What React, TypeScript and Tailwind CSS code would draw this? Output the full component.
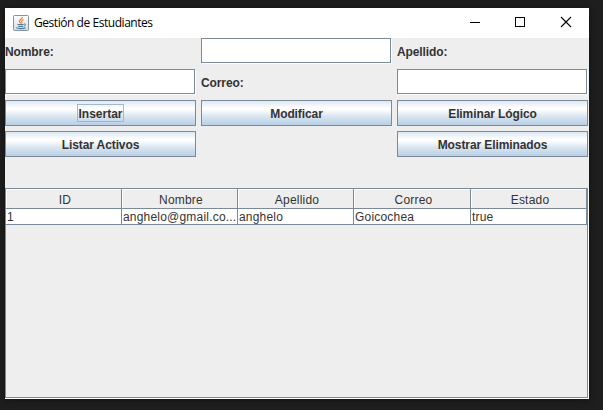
import React from "react";

function JavaIcon() {
  return (
    <svg width="16" height="16" viewBox="0 0 16 16" fill="none">
      <defs>
        <linearGradient id="plate" x1="0" y1="0" x2="0" y2="1">
          <stop offset="0" stopColor="#fdfdfd" />
          <stop offset="1" stopColor="#d3dbe2" />
        </linearGradient>
      </defs>
      <rect x="0.5" y="0.5" width="15" height="15" rx="0.8" fill="url(#plate)" stroke="#8095a8" />
      <path d="M9.2 2C9.8 3.8 6.2 4.7 6.4 6.4C6.5 7.2 7.3 7.7 7.8 8.4" stroke="#e8873a" strokeWidth="1.3" />
      <path d="M10.7 4.6C9 5.2 8.2 5.9 8.9 6.9C9.3 7.6 8.8 8 8.3 8.5" stroke="#e8873a" strokeWidth="1.1" />
      <path d="M4.5 9.5H10.6M5.3 11.4H10.2" stroke="#547b98" strokeWidth="1.1" />
      <path d="M10.8 9C13 8.5 13.1 10.4 11 11.3" stroke="#547b98" strokeWidth="1" />
      <path d="M3.2 12.6C4.5 13.9 10.8 13.8 12.6 12.7" stroke="#547b98" strokeWidth="1.2" />
    </svg>
  );
}

function TitleBar() {
  return (
    <header className="flex h-[30px] items-center bg-white pl-2">
      <JavaIcon />
      <span className="ml-[5px] w-[400px] font-['Open_Sans','Noto_Sans',sans-serif] text-[12px] leading-4 tracking-[-0.45px] whitespace-nowrap text-black">
        Gestión de Estudiantes
      </span>
      <svg className="ml-auto shrink-0" width="135" height="30" viewBox="0 0 135 30" fill="none" stroke="#000" shapeRendering="crispEdges">
        <path d="M16 14.5H26" />
        <rect x="61.5" y="9.5" width="9" height="9" />
        <path d="M107 9L117 19M117 9L107 19" shapeRendering="auto" strokeWidth="1.1" />
      </svg>
    </header>
  );
}

function Label({ children }: { children: React.ReactNode }) {
  return <label className="flex items-center pt-0.5 font-bold tracking-[-0.1px]">{children}</label>;
}

function Field() {
  return (
    <input
      type="text"
      className="mr-px mb-px min-w-0 border border-[#7a8a99] bg-white shadow-[1px_1px_0_#fff] outline-none"
    />
  );
}

function Button({ children, focused = false }: { children: React.ReactNode; focused?: boolean }) {
  return (
    <button className="flex items-center justify-center border border-[#7a8a99] bg-[linear-gradient(to_bottom,#dde8f3_0%,#ffffff_30%,#ffffff_36%,#dce7f1_62%,#b8cfe5_100%)] font-bold tracking-[-0.1px]">
      <span
        className={
          focused
            ? "w-[47px] border border-[#a3b8cc] pt-0.5 text-center leading-[14px] tracking-normal"
            : "pt-0.5 leading-[14px]"
        }
      >
        {children}
      </span>
    </button>
  );
}

const columns = ["ID", "Nombre", "Apellido", "Correo", "Estado"];
const rows = [["1", "anghelo@gmail.co...", "anghelo", "Goicochea", "true"]];

function StudentTable() {
  return (
    <section className="h-[211px] border-r border-b border-white">
      <div className="h-[210px] border border-[#7a8a99] tracking-[0.2px]">
        <div className="grid w-[581px] grid-cols-[116px_116px_116px_117px_116px]">
          {columns.map((c) => (
            <div key={c} className="h-5 border-r border-b border-[#7a8a99] pt-px pl-[3px] text-center leading-5 shadow-[inset_1px_1px_0_#fff]">
              {c}
            </div>
          ))}
          {rows.flat().map((v, i) => (
            <div key={i} className="h-4 overflow-hidden border-r border-b border-[#7a8a99] bg-white pt-px pl-px leading-[15px] whitespace-nowrap">
              {v}
            </div>
          ))}
        </div>
      </div>
    </section>
  );
}

export default function App() {
  return (
    <div className="h-[410px] w-[603px] overflow-hidden bg-[#1e1e1e] pt-2 pl-[5px]">
      <div className="h-[391px] w-[584px] bg-[#eeeeee] font-['Liberation_Sans',Arial,sans-serif] text-[12px] text-[#333333] shadow-[0_1px_6px_#111]">
        <TitleBar />
        <main>
          <div className="grid h-[150px] w-[583px] grid-cols-3 grid-rows-[repeat(5,26px)] gap-[5px]">
            <Label>Nombre:</Label>
            <Field />
            <Label>Apellido:</Label>
            <Field />
            <Label>Correo:</Label>
            <Field />
            <Button focused>Insertar</Button>
            <Button>Modificar</Button>
            <Button>Eliminar Lógico</Button>
            <Button>Listar Activos</Button>
            <span />
            <Button>Mostrar Eliminados</Button>
          </div>
          <StudentTable />
        </main>
      </div>
    </div>
  );
}
